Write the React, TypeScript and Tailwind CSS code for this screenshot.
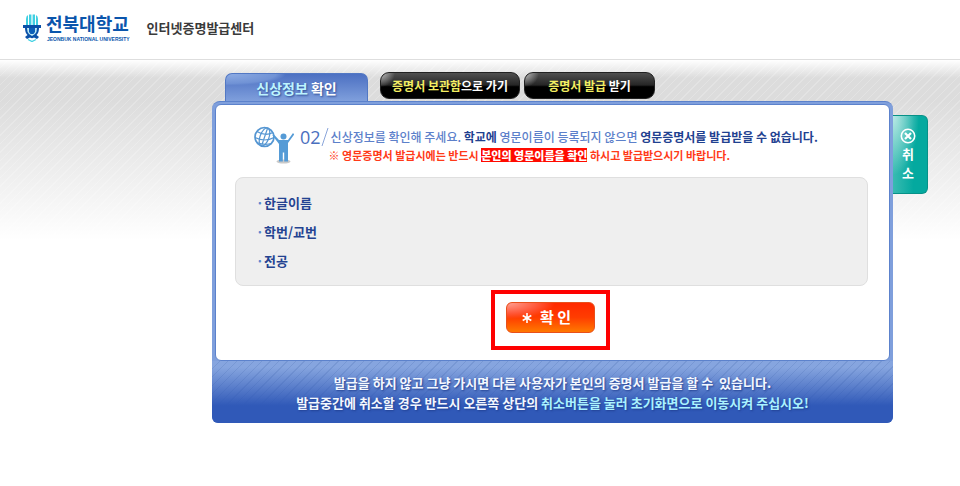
import React from 'react';

const FIELDS = ['한글이름', '학번/교번', '전공'];

const UniversityMark = () => (
  <svg viewBox="0 0 18 28" className="h-7 w-[18px] shrink-0" aria-hidden="true">
    <path d="M3 12V5q0-3 2-4v11zM6 12V0.500H8.400V12zM9.600 12V0.500H12V12zM13 12V1q2 1 2 4v7z" fill="#3fd0e2" />
    <path d="M0 11h18v3h-2q0 5-2.500 7l2.500 2-2 2-3-1.500Q9 25 7 23.500L4 25l-2-2 2.500-2Q2 19 2 14H0z" fill="#0a50a8" />
    <path d="M4 14h2l1 3h4l1-3h2q0 4-2 6l-3 2-3-2Q4 18 4 14z" fill="#bdeaf5" />
    <path d="M6 14h6v4l-1.500 2h-3L6 18z" fill="#0d5fb8" />
    <path d="M5 25.500L9 27.500l4-2" fill="none" stroke="#3fd0e2" strokeWidth="1.300" />
  </svg>
);

const GlobePerson = () => (
  <svg viewBox="0 0 40 38" className="h-[38px] w-10 shrink-0" aria-hidden="true">
    <ellipse cx="29.500" cy="35.500" rx="7" ry="2" fill="#c9c9c9" />
    <g fill="none" stroke="#5596d2" strokeWidth="1.200">
      <circle cx="10.500" cy="11" r="9.500" strokeWidth="1.700" />
      <ellipse cx="10.500" cy="11" rx="4.500" ry="9.500" transform="rotate(20 10.500 11)" />
      <path d="M3 5.500q8 5 16 1M1 11.500q10 5 19 0M2.500 16.500q8 3 15 1M13.500 2.500L7.500 20" />
    </g>
    <path d="M19.500 8l5.500 6h9L39 7l1.200 1.500-6.200 8.500V35.500h-3.800v-9h-1.400v9H25V18L18.500 9.500z" fill="#559bd6" />
    <circle cx="29.500" cy="10.500" r="3" fill="#559bd6" />
  </svg>
);

const Header = () => (
  <header className="flex h-[60px] items-center border-b border-[#dedede] bg-white pb-1 pl-[23px]">
    <a href="#" className="flex items-center gap-[5px]">
      <UniversityMark />
      <span className="flex flex-col text-[#0a55ac]">
        <span className="pt-px font-['Liberation_Sans','Noto_Sans_CJK_KR',sans-serif] text-[18px] leading-[22px] font-bold">
          전북대학교
        </span>
        <span className="pl-px font-['Liberation_Sans_Narrow','Liberation_Sans',sans-serif] text-[5px] leading-[6px] font-bold">
          JEONBUK NATIONAL UNIVERSITY
        </span>
      </span>
    </a>
    <h1 className="ml-[17px] text-[13px] leading-5 font-bold text-[#3a3a3a]">인터넷증명발급센터</h1>
  </header>
);

const DARK_BUTTON =
  'h-[27px] rounded-[9px] border border-[#222] bg-[radial-gradient(circle_at_top_left,#bbb_0,transparent_14px),linear-gradient(#505050,#262626_48%,#000_55%)] text-[12px] leading-5 font-bold text-white';

const Tabs = () => (
  <nav className="flex items-start pl-[13px]">
    <button
      type="button"
      className="mt-px h-[28px] w-[143px] rounded-t-[7px] border border-b-0 border-[#5278c4] bg-[radial-gradient(ellipse_at_top_left,#8eace3_0,#7092d5_50px,transparent_60px),linear-gradient(#4c70c2,#7f9fdc)] pt-px text-[14px] leading-6 font-bold text-white [text-shadow:1px_1px_2px_#2e4c96]"
    >
      <span className="text-[#bdf4ff]">신상정보</span> 확인
    </button>
    <button type="button" className={`${DARK_BUTTON} ml-3 w-[140px]`}>
      <span className="text-[#f3ee62]">증명서 보관함</span>으로 가기
    </button>
    <button type="button" className={`${DARK_BUTTON} ml-1 w-[131px]`}>
      <span className="text-[#f3ee62]">증명서 발급</span> 받기
    </button>
  </nav>
);

const Guide = () => (
  <div className="flex pl-[38px] whitespace-nowrap">
    <GlobePerson />
    <div className="ml-[6px] flex h-[22px] items-center text-[#4a6fbe]">
      <span className="font-['Open_Sans',sans-serif] text-[18px]">02</span>
      <svg viewBox="0 0 8 20" className="h-5 w-2" aria-hidden="true">
        <path d="M1 19L7 1" stroke="#8aa5da" />
      </svg>
    </div>
    <div>
      <p className="pl-[2px] text-[12px] leading-[22px] font-medium text-[#5c80ca]">
        신상정보를 확인해 주세요. <b className="text-[#1f4190]">학교에</b> 영문이름이 등록되지 않으면{' '}
        <b className="text-[#1f4190]">영문증명서를 발급받을 수 없습니다.</b>
      </p>
      <p className="text-[11px] leading-[14px] font-bold text-[#ff3a18]">
        ※ 영문증명서 발급시에는 반드시{' '}
        <strong className="inline-block bg-[#ff0b00] text-white">본인의 영문이름을 확인</strong>{' '}
        하시고 발급받으시기 바랍니다.
      </p>
    </div>
  </div>
);

const Notice = () => (
  <footer className="rounded-b-[6px] bg-[linear-gradient(transparent_10%,#3059b8_72%),repeating-linear-gradient(135deg,#86a5df_0_5px,#7898d4_5px_6px)] pt-3 pb-[10px] text-center text-[13px] leading-5 font-bold text-[#f4f8ff] [text-shadow:1px_1px_2px_#203f91]">
    <p className="whitespace-pre">발급을 하지 않고 그냥 가시면 다른 사용자가 본인의 증명서 발급을 할 수  있습니다.</p>
    <p>
      발급중간에 취소할 경우 반드시 오른쪽 상단의{' '}
      <span className="text-[#aaf2ff]">취소버튼을 눌러 초기화면으로 이동시켜 주십시오!</span>
    </p>
  </footer>
);

const CancelButton = () => (
  <button
    type="button"
    className="mt-[43px] flex h-[79px] w-[35px] shrink-0 flex-col items-center rounded-r-[6px] border border-l-0 border-[#079188] bg-[radial-gradient(ellipse_at_top_left,#b9e9e5_0,transparent_26px),linear-gradient(90deg,#39bbb1,#04a99f_60%)] pt-3 pr-1 text-[13px] leading-[19px] font-bold text-white"
  >
    <svg viewBox="0 0 16 16" className="h-4 w-4 shrink-0" aria-hidden="true">
      <circle cx="8" cy="8" r="6.700" fill="none" stroke="#fff" strokeWidth="1.600" />
      <path d="M5 5l6 6M11 5l-6 6" stroke="#fff" strokeWidth="2.200" />
    </svg>
    <span>취</span>
    <span>소</span>
  </button>
);

export default function App() {
  return (
    <div className="min-h-screen bg-white font-['Noto_Sans_CJK_KR',sans-serif]">
      <Header />
      <main className="flex min-h-[426px] items-start bg-[linear-gradient(#fff_0,transparent_18px,transparent_40px,#fff_180px),repeating-linear-gradient(135deg,#dcdcdc_0_5px,#e3e3e3_5px_6px)] pt-3 pr-8 pl-[212px]">
        <div className="min-w-0 flex-1">
          <Tabs />
          <div className="rounded-t-[8px] rounded-b-[6px] border-t border-[#5c82cc] bg-[#7f9fdc]">
            <div className="px-[3px] pt-[2px]">
              <section className="rounded-[6px] border border-[#5c82cc] bg-white pt-[21px] pb-[10px]">
                <Guide />
                <ul className="mt-[13px] mr-[21px] ml-[19px] rounded-[8px] border border-[#dfdfdf] bg-[#efefef] px-5 py-[10px] text-[13px] leading-[29px] font-bold text-[#244391]">
                  {FIELDS.map((field) => (
                    <li key={field} className="flex gap-[3px]">
                      <span className="w-[5px] text-[#5b86cf]">·</span>
                      {field}
                    </li>
                  ))}
                </ul>
                <div className="mt-1 flex justify-center pr-1">
                  <div className="border-4 border-[#fe0000] px-[11px] pt-2 pb-[13px]">
                    <button
                      type="button"
                      className="flex h-[31px] w-[89px] items-center justify-center gap-2 rounded-[6px] border border-[#e8501c] bg-[radial-gradient(ellipse_at_top_left,#ffa092_0,#ff5a3c_30px,transparent_48px),linear-gradient(#ff2900,#ff3d00_50%,#ff7900)] pr-2 text-[15px] font-bold text-white"
                    >
                      <svg viewBox="0 0 10 10" className="h-[10px] w-[10px]" aria-hidden="true">
                        <path d="M5 0v10M0.700 2.500l8.600 5M9.300 2.500l-8.600 5" stroke="#fff" strokeWidth="1.600" />
                      </svg>
                      확 인
                    </button>
                  </div>
                </div>
              </section>
            </div>
            <Notice />
          </div>
        </div>
        <CancelButton />
      </main>
    </div>
  );
}
